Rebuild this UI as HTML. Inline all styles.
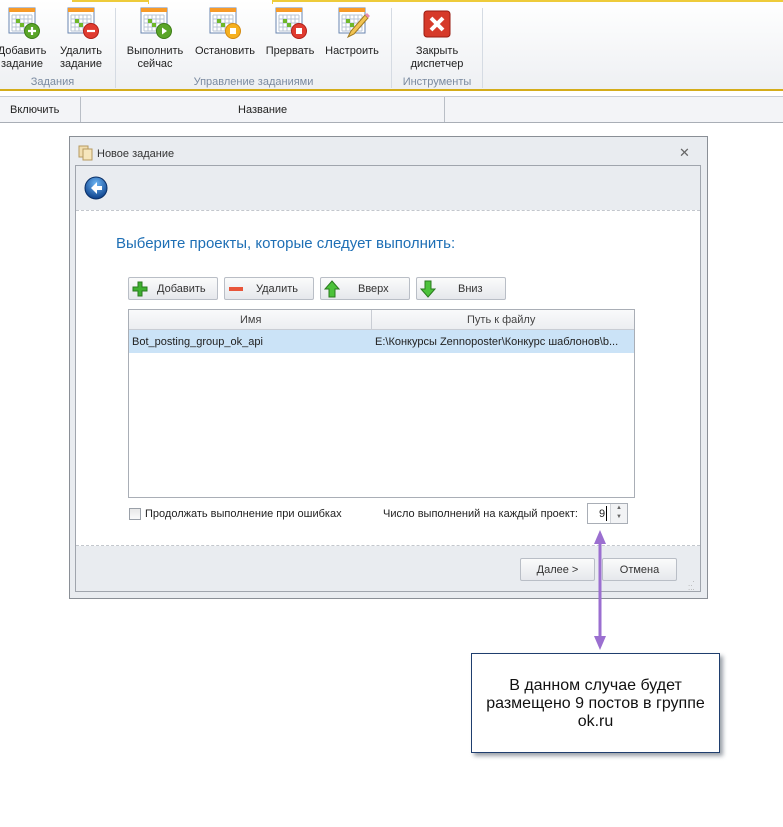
<!DOCTYPE html>
<html><head><meta charset="utf-8"><style>
*{margin:0;padding:0;box-sizing:border-box}
body{width:783px;height:827px;background:#fff;font-family:"Liberation Sans",sans-serif;font-size:11px;color:#222;position:relative;overflow:hidden}
.a{position:absolute}
.rib{left:0;top:0;width:783px;height:91px;background:linear-gradient(#fff,#eef0f3);border-bottom:2px solid #d4ac1a}
.lbl{text-align:center;color:#222;font-size:11px;line-height:13px}
.grp{color:#7a8aa0;font-size:11px;text-align:center}
.sep{width:1px;background:#d5dbe3;top:8px;height:80px}
.btn{background:linear-gradient(#fbfbfb,#e6e8ec);border:1px solid #b9bec6;border-radius:2px;height:23px;line-height:23px;font-size:11px;color:#333}
</style></head><body>
<div class="a" style="left:0;top:0;width:72px;height:2px;background:#3a7bd5"></div>
<div class="a rib"></div>
<div class="a" style="left:72px;top:0;width:77px;height:2px;background:#eecb3a"></div>
<div class="a" style="left:148px;top:0;width:1px;height:4px;background:#eecb3a"></div>
<div class="a" style="left:272px;top:0;width:511px;height:2px;background:#eecb3a"></div>
<div class="a" style="left:272px;top:0;width:1px;height:4px;background:#eecb3a"></div>

<svg width="0" height="0" style="position:absolute"><defs>
<g id="cal"><rect x="1" y="1" width="26" height="25" fill="#fff" stroke="#6a86b0"/><rect x="1" y="1" width="26" height="4" fill="#f79a28"/>
<g stroke="#b8c4d4" stroke-width="1"><path d="M4 8h20M4 12h20M4 16h20M4 20h20M4 24h20M4 8v16M8 8v16M12 8v16M16 8v16M20 8v16M24 8v16"/></g>
<rect x="8" y="12" width="4" height="4" fill="#6fb82a"/><rect x="12" y="16" width="4" height="4" fill="#6fb82a"/></g>
</defs></svg>

<svg class="a" style="left:8px;top:7px" width="34" height="32"><use href="#cal"/><circle cx="24" cy="24" r="7.5" fill="#5aa528" stroke="#3d7d17"/><path d="M24 20v8M20 24h8" stroke="#fff" stroke-width="2.2"/></svg>
<svg class="a" style="left:67px;top:7px" width="34" height="32"><use href="#cal"/><circle cx="24" cy="24" r="7.5" fill="#e03b30" stroke="#b02018"/><path d="M20 24h8" stroke="#fff" stroke-width="2.2"/></svg>
<svg class="a" style="left:140px;top:7px" width="34" height="32"><use href="#cal"/><circle cx="24" cy="24" r="7.5" fill="#5aa528" stroke="#3d7d17"/><path d="M22 20.5v7l5-3.5z" fill="#fff"/></svg>
<svg class="a" style="left:209px;top:7px" width="34" height="32"><use href="#cal"/><circle cx="24" cy="24" r="7.5" fill="#f5b020" stroke="#d48a10"/><rect x="21" y="21" width="6" height="6" fill="#fff"/></svg>
<svg class="a" style="left:275px;top:7px" width="34" height="32"><use href="#cal"/><circle cx="24" cy="24" r="7.5" fill="#e03b30" stroke="#b02018"/><rect x="21" y="21" width="6" height="6" fill="#fff"/></svg>
<svg class="a" style="left:338px;top:7px" width="34" height="32"><use href="#cal"/><path d="M10 30l3-6 14-16 3 3-14 16z" fill="#f2c453" stroke="#a07a20"/><path d="M27 8l3 3 2-2-3-3z" fill="#e88ab0"/></svg>
<svg class="a" style="left:423px;top:10px" width="28" height="28"><rect x="1" y="1" width="26" height="26" rx="3" fill="#d63a2a" stroke="#9a1c12"/><path d="M8 8l12 12M20 8L8 20" stroke="#fff" stroke-width="4"/></svg>

<div class="a lbl" style="left:-6px;top:45px;width:56px">Добавить<br>задание</div>
<div class="a lbl" style="left:55px;top:45px;width:52px">Удалить<br>задание</div>
<div class="a lbl" style="left:122px;top:45px;width:66px">Выполнить<br>сейчас</div>
<div class="a lbl" style="left:190px;top:45px;width:70px">Остановить</div>
<div class="a lbl" style="left:262px;top:45px;width:56px">Прервать</div>
<div class="a lbl" style="left:322px;top:45px;width:60px">Настроить</div>
<div class="a lbl" style="left:400px;top:45px;width:74px">Закрыть<br>диспетчер</div>
<div class="a grp" style="left:10px;top:76px;width:85px">Задания</div>
<div class="a grp" style="left:116px;top:76px;width:275px">Управление заданиями</div>
<div class="a grp" style="left:392px;top:76px;width:90px">Инструменты</div>
<div class="a sep" style="left:115px"></div>
<div class="a sep" style="left:391px"></div>
<div class="a sep" style="left:482px"></div>

<div class="a" style="left:0;top:96px;width:783px;height:27px;background:#f3f4f7;border-top:1px solid #c9cdd4;border-bottom:1px solid #a9aeb6"></div>
<div class="a" style="left:80px;top:97px;width:1px;height:25px;background:#b9bec6"></div>
<div class="a" style="left:444px;top:97px;width:1px;height:25px;background:#b9bec6"></div>
<div class="a" style="left:10px;top:104px">Включить</div>
<div class="a" style="left:238px;top:104px">Название</div>

<div class="a" style="left:69px;top:136px;width:639px;height:463px;background:#e9ecf0;border:1px solid #8a8f96"></div>
<svg class="a" style="left:78px;top:145px" width="16" height="16"><rect x="1" y="1" width="9" height="11" fill="#f1deb0" stroke="#b69a60"/><rect x="5" y="4" width="9" height="11" fill="#f6e6bc" stroke="#b69a60"/></svg>
<div class="a" style="left:97px;top:148px;color:#333">Новое задание</div>
<div class="a" style="left:679px;top:145px;color:#666;font-size:13px">✕</div>
<div class="a" style="left:75px;top:165px;width:626px;height:427px;background:#e9ecf0;border:1px solid #a0a5ad"></div>
<svg class="a" style="left:84px;top:176px" width="24" height="24"><defs><radialGradient id="bg" cx="50%" cy="30%" r="70%"><stop offset="0" stop-color="#6db6f5"/><stop offset="1" stop-color="#0b3f8a"/></radialGradient></defs><circle cx="12" cy="12" r="11" fill="url(#bg)" stroke="#0a2f66"/><path d="M13 6l-6 6 6 6v-4h5v-4h-5z" fill="#fff"/></svg>
<div class="a" style="left:76px;top:210px;width:624px;height:336px;background:#fff;border-top:1px dashed #c3c7cd;border-bottom:1px dashed #c3c7cd"></div>
<div class="a" style="left:116px;top:235px;font-size:15px;color:#1e6fb5">Выберите проекты, которые следует выполнить:</div>

<div class="a btn" style="left:128px;top:277px;width:90px"><svg class="a" style="left:3px;top:3px" width="16" height="16"><path d="M6 1h4v5h5v4h-5v5H6v-5H1V6h5z" fill="#3fb030" stroke="#2a7a1e"/></svg><span class="a" style="left:28px">Добавить</span></div>
<div class="a btn" style="left:224px;top:277px;width:90px"><svg class="a" style="left:3px;top:3px" width="16" height="16"><rect x="1" y="6" width="14" height="4" fill="#e8553a"/></svg><span class="a" style="left:31px">Удалить</span></div>
<div class="a btn" style="left:320px;top:277px;width:90px"><svg class="a" style="left:3px;top:2px" width="16" height="18"><path d="M8 1l7 8h-4v8H5V9H1z" fill="#4cc23a" stroke="#2a7a1e"/></svg><span class="a" style="left:37px">Вверх</span></div>
<div class="a btn" style="left:416px;top:277px;width:90px"><svg class="a" style="left:3px;top:2px" width="16" height="18"><path d="M8 17l7-8h-4V1H5v8H1z" fill="#4cc23a" stroke="#2a7a1e"/></svg><span class="a" style="left:41px">Вниз</span></div>

<div class="a" style="left:128px;top:309px;width:507px;height:189px;border:1px solid #a9aeb6;background:#fff"></div>
<div class="a" style="left:129px;top:310px;width:505px;height:20px;background:linear-gradient(#f9fafb,#eceef1);border-bottom:1px solid #c9cdd4"></div>
<div class="a" style="left:371px;top:310px;width:1px;height:20px;background:#c9cdd4"></div>
<div class="a" style="left:240px;top:314px;color:#444">Имя</div>
<div class="a" style="left:467px;top:314px;color:#444">Путь к файлу</div>
<div class="a" style="left:129px;top:330px;width:505px;height:23px;background:#cbe3f7"></div>
<div class="a" style="left:132px;top:336px">Bot_posting_group_ok_api</div>
<div class="a" style="left:375px;top:336px">E:\Конкурсы Zennoposter\Конкурс шаблонов\b...</div>

<div class="a" style="left:129px;top:508px;width:12px;height:12px;border:1px solid #9aa0a8;background:linear-gradient(#e8e8e8,#fafafa)"></div>
<div class="a" style="left:145px;top:508px">Продолжать выполнение при ошибках</div>
<div class="a" style="left:383px;top:508px">Число выполнений на каждый проект:</div>
<div class="a" style="left:587px;top:503px;width:41px;height:21px;border:1px solid #a9aeb6;background:#fff"></div>
<div class="a" style="left:599px;top:508px">9</div>
<div class="a" style="left:606px;top:506px;width:1px;height:15px;background:#000"></div>
<div class="a" style="left:610px;top:504px;width:17px;height:19px;background:#f2f3f5;border-left:1px solid #d0d3d8;font-size:6px;color:#666;text-align:center;line-height:9px">▲<br>▼</div>

<div class="a btn" style="left:520px;top:558px;width:75px;text-align:center">Далее &gt;</div>
<div class="a btn" style="left:602px;top:558px;width:75px;text-align:center">Отмена</div>
<div class="a" style="left:688px;top:578px;color:#aaa;font-size:8px;line-height:4px">&nbsp;&nbsp;.<br>..<br>...</div>

<svg class="a" style="left:590px;top:528px" width="20" height="124"><path d="M10 12v100" stroke="#9b6fd0" stroke-width="3"/><path d="M4 16l6-14 6 14z" fill="#9b6fd0"/><path d="M4 108l6 14 6-14z" fill="#9b6fd0"/></svg>

<div class="a" style="left:474px;top:656px;width:249px;height:100px;background:#9aa0a8;filter:blur(2px)"></div>
<div class="a" style="left:471px;top:653px;width:249px;height:100px;background:#fff;border:1px solid #1f3e6e;font-size:16px;line-height:18px;text-align:center;padding-top:23px;color:#111">В данном случае будет<br>размещено 9 постов в группе<br>ok.ru</div>
</body></html>
